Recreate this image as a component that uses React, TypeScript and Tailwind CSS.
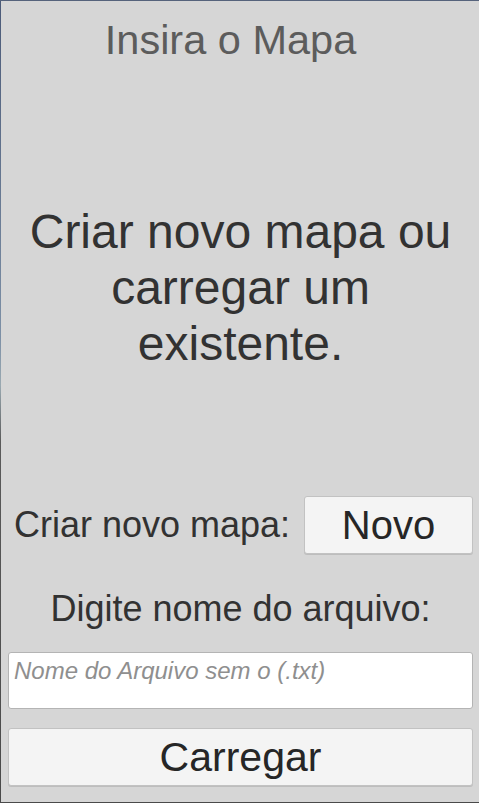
const font = { fontFamily: '"Liberation Sans", Arial, sans-serif' };

const App = () => {
  return (
    <div className="flex h-[803px] w-full border-t border-b border-t-[#56637c] border-b-[#4a4a4a] bg-[#d6d6d6]" style={font}>
      <div className="w-px shrink-0 bg-[linear-gradient(to_bottom,#4b5a78_0%,#7d90a6_42%,#9aa9b1_48%,#5a5a5a_55%,#4a4a4a_100%)]" />
      <div className="flex flex-1 flex-col pl-[7px] pr-[6px]">
        <h1 className="mt-[15px] pr-[20px] text-center text-[41.5px] leading-[48px] text-[#5c5c5c]">
          Insira o Mapa
        </h1>

        <p className="mt-[140px] px-[16px] text-center text-[48px] leading-[56px] text-[#323232]">
          Criar novo mapa ou carregar um existente.
        </p>

        <div className="mt-[124px] flex h-[58px] items-center justify-between">
          <span className="pl-[6px] text-[36px] leading-[42px] text-[#323232]">Criar novo mapa:</span>
          <button
            type="button"
            className="h-[58px] w-[169px] rounded-[3px] border border-[#c2c2c2] bg-[#f4f4f4] text-[40px] leading-none text-[#262626] shadow-[0_1px_0_#bdbdbd]"
          >
            Novo
          </button>
        </div>

        <label
          htmlFor="arquivo"
          className="mt-[34px] block text-center text-[36px] leading-[42px] text-[#323232]"
        >
          Digite nome do arquivo:
        </label>

        <textarea
          id="arquivo"
          placeholder="Nome do Arquivo sem o (.txt)"
          className="mt-[22px] h-[57px] w-full resize-none rounded-[3px] border border-[#b4b4b4] bg-white px-[5px] pt-[4px] text-[24px] italic leading-[28px] text-[#323232] outline-none placeholder:text-[#8f8f8f]"
        />

        <button
          type="button"
          className="mt-[19px] h-[58px] w-full rounded-[3px] border border-[#c2c2c2] bg-[#f4f4f4] text-[41px] leading-none text-[#262626] shadow-[0_1px_0_#bdbdbd]"
        >
          Carregar
        </button>
      </div>
    </div>
  );
};

export default App;
